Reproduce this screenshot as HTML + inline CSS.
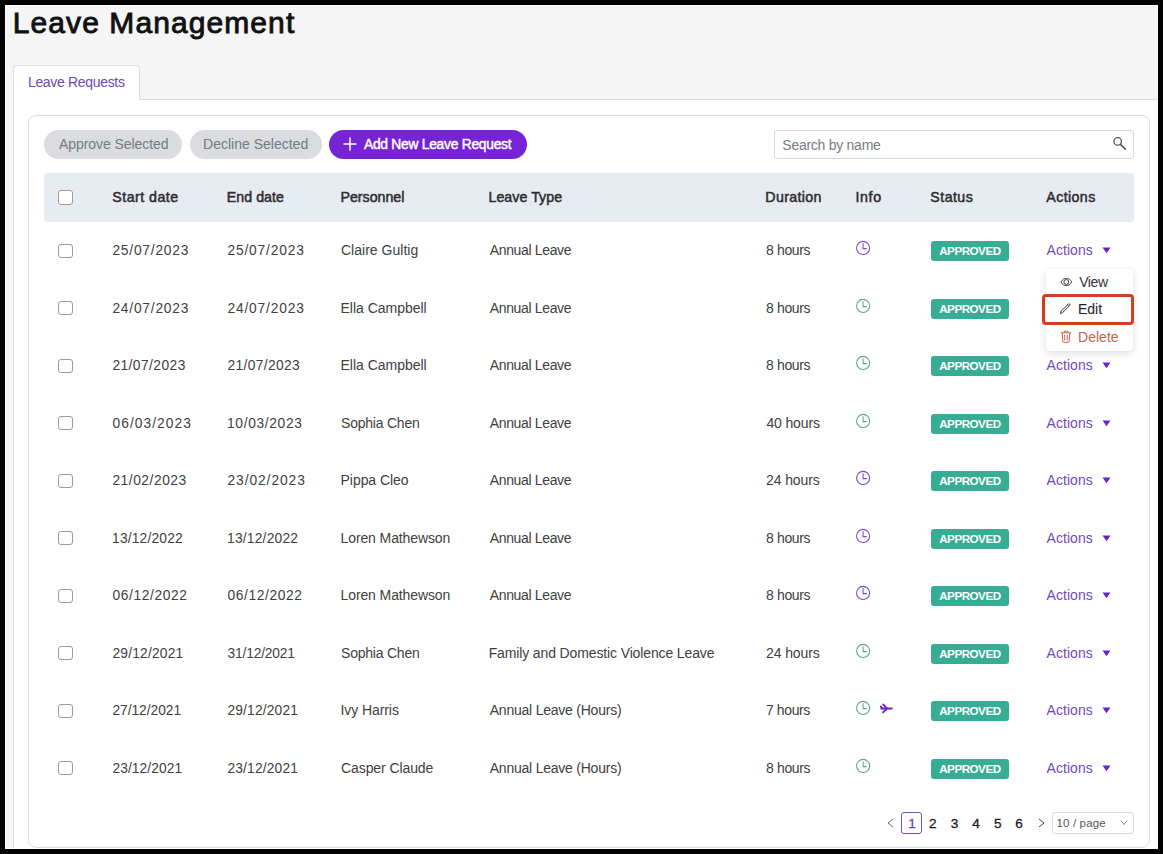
<!DOCTYPE html><html><head><meta charset="utf-8"><style>
*{box-sizing:border-box}
html,body{margin:0;padding:0}
body{width:1163px;height:854px;overflow:hidden;background:#000;position:relative;font-family:"Liberation Sans",sans-serif}
.t{position:absolute;white-space:nowrap}
.a{position:absolute}
</style></head><body><div class="a" style="left:5px;top:5px;width:1153px;height:844px;background:#fff"></div>
<div class="a" style="left:6px;top:6px;width:1151px;height:842px;background:#f5f5f5"></div>
<div class="t" style="left:12.74px;top:8px;font-size:30px;line-height:30px;color:#111;font-weight:400;letter-spacing:1.087px;-webkit-text-stroke:0.9px #111">Leave Management</div>
<div class="a" style="left:13px;top:99px;width:1144px;height:749px;background:#fff;border-top:1px solid #dedede;border-left:1px solid #dedede"></div>
<div class="a" style="left:13px;top:65px;width:127px;height:35px;background:#fff;border:1px solid #dedede;border-bottom:none;border-radius:4px 4px 0 0"></div>
<div class="t" style="left:27.95px;top:75px;font-size:14px;line-height:14px;color:#7048b0;font-weight:400;letter-spacing:-0.326px;">Leave Requests</div>
<div class="a" style="left:28px;top:115px;width:1122px;height:733px;background:#fff;border:1px solid #dddddd;border-radius:8px"></div>
<div class="a" style="left:44px;top:130px;width:138px;height:29px;background:#dbdce0;border-radius:15px"></div>
<div class="t" style="left:59.07px;top:137px;font-size:14px;line-height:14px;color:#767a80;font-weight:400;letter-spacing:-0.073px;">Approve Selected</div>
<div class="a" style="left:190px;top:130px;width:132px;height:29px;background:#dbdce0;border-radius:15px"></div>
<div class="t" style="left:203.05px;top:137px;font-size:14px;line-height:14px;color:#767a80;font-weight:400;letter-spacing:0.006px;">Decline Selected</div>
<div class="a" style="left:329px;top:130px;width:198px;height:29px;background:#7623d5;border-radius:15px"></div>
<svg class="a" style="left:343px;top:137px" width="14" height="14" viewBox="0 0 14 14"><path d="M7 0.5V13.5M0.5 7H13.5" stroke="#fff" stroke-width="1.5" fill="none"/></svg>
<div class="t" style="left:363.97px;top:138px;font-size:13.8px;line-height:13.8px;color:#fff;font-weight:400;letter-spacing:-0.251px;-webkit-text-stroke:0.45px #fff">Add New Leave Request</div>
<div class="a" style="left:774px;top:130px;width:360px;height:29px;background:#fff;border:1px solid #d9d9d9;border-radius:3px"></div>
<div class="t" style="left:782.36px;top:138px;font-size:14px;line-height:14px;color:#777c84;font-weight:400;letter-spacing:-0.268px;">Search by name</div>
<svg class="a" style="left:1112px;top:136px" width="15" height="15" viewBox="0 0 15 15"><circle cx="5.7" cy="5.45" r="3.75" stroke="#555" stroke-width="1.3" fill="none"/><path d="M8.5 8.4L13.3 13.1" stroke="#555" stroke-width="1.6" stroke-linecap="round"/></svg>
<div class="a" style="left:44px;top:173px;width:1090px;height:49px;background:#e7ebf2;border-radius:3px"></div>
<div class="a" style="left:58px;top:190px;width:15px;height:15px;background:#fff;border:1px solid #9c9c9c;border-radius:3px"></div>
<div class="t" style="left:112.25px;top:190px;font-size:14.2px;line-height:14.2px;color:#2e2e2e;font-weight:400;letter-spacing:0.490px;-webkit-text-stroke:0.5px #2e2e2e">Start date</div>
<div class="t" style="left:226.84px;top:190px;font-size:14.2px;line-height:14.2px;color:#2e2e2e;font-weight:400;letter-spacing:0.033px;-webkit-text-stroke:0.5px #2e2e2e">End date</div>
<div class="t" style="left:340.44px;top:190px;font-size:14.2px;line-height:14.2px;color:#2e2e2e;font-weight:400;letter-spacing:0.009px;-webkit-text-stroke:0.5px #2e2e2e">Personnel</div>
<div class="t" style="left:488.44px;top:190px;font-size:14.2px;line-height:14.2px;color:#2e2e2e;font-weight:400;letter-spacing:0.059px;-webkit-text-stroke:0.5px #2e2e2e">Leave Type</div>
<div class="t" style="left:765.34px;top:190px;font-size:14.2px;line-height:14.2px;color:#2e2e2e;font-weight:400;letter-spacing:0.342px;-webkit-text-stroke:0.5px #2e2e2e">Duration</div>
<div class="t" style="left:855.49px;top:190px;font-size:14.2px;line-height:14.2px;color:#2e2e2e;font-weight:400;letter-spacing:0.639px;-webkit-text-stroke:0.5px #2e2e2e">Info</div>
<div class="t" style="left:930.35px;top:190px;font-size:14.2px;line-height:14.2px;color:#2e2e2e;font-weight:400;letter-spacing:0.439px;-webkit-text-stroke:0.5px #2e2e2e">Status</div>
<div class="t" style="left:1046.27px;top:190px;font-size:14.2px;line-height:14.2px;color:#2e2e2e;font-weight:400;letter-spacing:0.411px;-webkit-text-stroke:0.5px #2e2e2e">Actions</div>
<div class="a" style="left:58px;top:244px;width:15px;height:14px;background:#fff;border:1px solid #9c9c9c;border-radius:3px"></div>
<div class="t" style="left:112.41px;top:244px;font-size:13.8px;line-height:13.8px;color:#404040;font-weight:400;letter-spacing:0.771px;">25/07/2023</div>
<div class="t" style="left:227.41px;top:244px;font-size:13.8px;line-height:13.8px;color:#404040;font-weight:400;letter-spacing:0.838px;">25/07/2023</div>
<div class="t" style="left:341.00px;top:243px;font-size:14px;line-height:14px;color:#404040;font-weight:400;letter-spacing:0.014px;">Claire Gultig</div>
<div class="t" style="left:489.77px;top:243px;font-size:14px;line-height:14px;color:#404040;font-weight:400;letter-spacing:-0.353px;">Annual Leave</div>
<div class="t" style="left:766.08px;top:243px;font-size:14px;line-height:14px;color:#404040;font-weight:400;letter-spacing:-0.364px;">8 hours</div>
<svg class="a" style="left:855.1px;top:240px" width="16" height="16" viewBox="0 0 16 16"><circle cx="8.1" cy="7.9" r="6.55" stroke="#7a48c4" stroke-width="1.05" fill="none"/><path d="M8.1 3.3V8.6H11.8" stroke="#7a48c4" stroke-width="1.05" fill="none"/></svg>
<div class="a" style="left:931px;top:241px;width:78px;height:20px;background:#38ad96;border-radius:3px"></div>
<div class="t" style="left:939.20px;top:245px;font-size:11.6px;line-height:11.6px;color:#fff;font-weight:700;letter-spacing:-0.459px;">APPROVED</div>
<div class="t" style="left:1046.57px;top:243px;font-size:14px;line-height:14px;color:#7448bd;font-weight:400;letter-spacing:0.052px;">Actions</div>
<svg class="a" style="left:1102px;top:247px" width="9" height="7" viewBox="0 0 9 7"><path d="M0.5 0.5H8.5L4.5 6.3Z" fill="#6a22d0"/></svg>
<div class="a" style="left:58px;top:301px;width:15px;height:14px;background:#fff;border:1px solid #9c9c9c;border-radius:3px"></div>
<div class="t" style="left:112.41px;top:302px;font-size:13.8px;line-height:13.8px;color:#404040;font-weight:400;letter-spacing:0.771px;">24/07/2023</div>
<div class="t" style="left:227.41px;top:302px;font-size:13.8px;line-height:13.8px;color:#404040;font-weight:400;letter-spacing:0.838px;">24/07/2023</div>
<div class="t" style="left:340.55px;top:301px;font-size:14px;line-height:14px;color:#404040;font-weight:400;letter-spacing:-0.026px;">Ella Campbell</div>
<div class="t" style="left:489.77px;top:301px;font-size:14px;line-height:14px;color:#404040;font-weight:400;letter-spacing:-0.353px;">Annual Leave</div>
<div class="t" style="left:766.08px;top:301px;font-size:14px;line-height:14px;color:#404040;font-weight:400;letter-spacing:-0.364px;">8 hours</div>
<svg class="a" style="left:855.1px;top:298px" width="16" height="16" viewBox="0 0 16 16"><circle cx="8.1" cy="7.9" r="6.55" stroke="#62a393" stroke-width="1.05" fill="none"/><path d="M8.1 3.3V8.6H11.8" stroke="#62a393" stroke-width="1.05" fill="none"/></svg>
<div class="a" style="left:931px;top:299px;width:78px;height:20px;background:#38ad96;border-radius:3px"></div>
<div class="t" style="left:939.20px;top:303px;font-size:11.6px;line-height:11.6px;color:#fff;font-weight:700;letter-spacing:-0.459px;">APPROVED</div>
<div class="t" style="left:1046.57px;top:301px;font-size:14px;line-height:14px;color:#7448bd;font-weight:400;letter-spacing:0.052px;">Actions</div>
<svg class="a" style="left:1102px;top:305px" width="9" height="7" viewBox="0 0 9 7"><path d="M0.5 0.5H8.5L4.5 6.3Z" fill="#6a22d0"/></svg>
<div class="a" style="left:58px;top:359px;width:15px;height:14px;background:#fff;border:1px solid #9c9c9c;border-radius:3px"></div>
<div class="t" style="left:112.41px;top:359px;font-size:13.8px;line-height:13.8px;color:#404040;font-weight:400;letter-spacing:0.427px;">21/07/2023</div>
<div class="t" style="left:227.41px;top:359px;font-size:13.8px;line-height:13.8px;color:#404040;font-weight:400;letter-spacing:0.371px;">21/07/2023</div>
<div class="t" style="left:340.55px;top:358px;font-size:14px;line-height:14px;color:#404040;font-weight:400;letter-spacing:-0.026px;">Ella Campbell</div>
<div class="t" style="left:489.77px;top:358px;font-size:14px;line-height:14px;color:#404040;font-weight:400;letter-spacing:-0.353px;">Annual Leave</div>
<div class="t" style="left:766.08px;top:358px;font-size:14px;line-height:14px;color:#404040;font-weight:400;letter-spacing:-0.364px;">8 hours</div>
<svg class="a" style="left:855.1px;top:355px" width="16" height="16" viewBox="0 0 16 16"><circle cx="8.1" cy="7.9" r="6.55" stroke="#62a393" stroke-width="1.05" fill="none"/><path d="M8.1 3.3V8.6H11.8" stroke="#62a393" stroke-width="1.05" fill="none"/></svg>
<div class="a" style="left:931px;top:356px;width:78px;height:20px;background:#38ad96;border-radius:3px"></div>
<div class="t" style="left:939.20px;top:360px;font-size:11.6px;line-height:11.6px;color:#fff;font-weight:700;letter-spacing:-0.459px;">APPROVED</div>
<div class="t" style="left:1046.57px;top:358px;font-size:14px;line-height:14px;color:#7448bd;font-weight:400;letter-spacing:0.052px;">Actions</div>
<svg class="a" style="left:1102px;top:362px" width="9" height="7" viewBox="0 0 9 7"><path d="M0.5 0.5H8.5L4.5 6.3Z" fill="#6a22d0"/></svg>
<div class="a" style="left:58px;top:416px;width:15px;height:14px;background:#fff;border:1px solid #9c9c9c;border-radius:3px"></div>
<div class="t" style="left:112.55px;top:417px;font-size:13.8px;line-height:13.8px;color:#404040;font-weight:400;letter-spacing:1.023px;">06/03/2023</div>
<div class="t" style="left:227.05px;top:417px;font-size:13.8px;line-height:13.8px;color:#404040;font-weight:400;letter-spacing:0.645px;">10/03/2023</div>
<div class="t" style="left:341.06px;top:416px;font-size:14px;line-height:14px;color:#404040;font-weight:400;letter-spacing:-0.221px;">Sophia Chen</div>
<div class="t" style="left:489.77px;top:416px;font-size:14px;line-height:14px;color:#404040;font-weight:400;letter-spacing:-0.353px;">Annual Leave</div>
<div class="t" style="left:766.39px;top:416px;font-size:14px;line-height:14px;color:#404040;font-weight:400;letter-spacing:-0.125px;">40 hours</div>
<svg class="a" style="left:855.1px;top:413px" width="16" height="16" viewBox="0 0 16 16"><circle cx="8.1" cy="7.9" r="6.55" stroke="#62a393" stroke-width="1.05" fill="none"/><path d="M8.1 3.3V8.6H11.8" stroke="#62a393" stroke-width="1.05" fill="none"/></svg>
<div class="a" style="left:931px;top:414px;width:78px;height:20px;background:#38ad96;border-radius:3px"></div>
<div class="t" style="left:939.20px;top:418px;font-size:11.6px;line-height:11.6px;color:#fff;font-weight:700;letter-spacing:-0.459px;">APPROVED</div>
<div class="t" style="left:1046.57px;top:416px;font-size:14px;line-height:14px;color:#7448bd;font-weight:400;letter-spacing:0.052px;">Actions</div>
<svg class="a" style="left:1102px;top:420px" width="9" height="7" viewBox="0 0 9 7"><path d="M0.5 0.5H8.5L4.5 6.3Z" fill="#6a22d0"/></svg>
<div class="a" style="left:58px;top:474px;width:15px;height:14px;background:#fff;border:1px solid #9c9c9c;border-radius:3px"></div>
<div class="t" style="left:112.41px;top:474px;font-size:13.8px;line-height:13.8px;color:#404040;font-weight:400;letter-spacing:0.527px;">21/02/2023</div>
<div class="t" style="left:227.41px;top:474px;font-size:13.8px;line-height:13.8px;color:#404040;font-weight:400;letter-spacing:0.938px;">23/02/2023</div>
<div class="t" style="left:340.55px;top:473px;font-size:14px;line-height:14px;color:#404040;font-weight:400;letter-spacing:-0.050px;">Pippa Cleo</div>
<div class="t" style="left:489.77px;top:473px;font-size:14px;line-height:14px;color:#404040;font-weight:400;letter-spacing:-0.353px;">Annual Leave</div>
<div class="t" style="left:766.00px;top:473px;font-size:14px;line-height:14px;color:#404040;font-weight:400;letter-spacing:-0.112px;">24 hours</div>
<svg class="a" style="left:855.1px;top:470px" width="16" height="16" viewBox="0 0 16 16"><circle cx="8.1" cy="7.9" r="6.55" stroke="#7a48c4" stroke-width="1.05" fill="none"/><path d="M8.1 3.3V8.6H11.8" stroke="#7a48c4" stroke-width="1.05" fill="none"/></svg>
<div class="a" style="left:931px;top:471px;width:78px;height:20px;background:#38ad96;border-radius:3px"></div>
<div class="t" style="left:939.20px;top:475px;font-size:11.6px;line-height:11.6px;color:#fff;font-weight:700;letter-spacing:-0.459px;">APPROVED</div>
<div class="t" style="left:1046.57px;top:473px;font-size:14px;line-height:14px;color:#7448bd;font-weight:400;letter-spacing:0.052px;">Actions</div>
<svg class="a" style="left:1102px;top:477px" width="9" height="7" viewBox="0 0 9 7"><path d="M0.5 0.5H8.5L4.5 6.3Z" fill="#6a22d0"/></svg>
<div class="a" style="left:58px;top:531px;width:15px;height:14px;background:#fff;border:1px solid #9c9c9c;border-radius:3px"></div>
<div class="t" style="left:112.05px;top:532px;font-size:13.8px;line-height:13.8px;color:#404040;font-weight:400;letter-spacing:0.176px;">13/12/2022</div>
<div class="t" style="left:227.05px;top:532px;font-size:13.8px;line-height:13.8px;color:#404040;font-weight:400;letter-spacing:0.209px;">13/12/2022</div>
<div class="t" style="left:340.55px;top:531px;font-size:14px;line-height:14px;color:#404040;font-weight:400;letter-spacing:-0.111px;">Loren Mathewson</div>
<div class="t" style="left:489.77px;top:531px;font-size:14px;line-height:14px;color:#404040;font-weight:400;letter-spacing:-0.353px;">Annual Leave</div>
<div class="t" style="left:766.08px;top:531px;font-size:14px;line-height:14px;color:#404040;font-weight:400;letter-spacing:-0.364px;">8 hours</div>
<svg class="a" style="left:855.1px;top:528px" width="16" height="16" viewBox="0 0 16 16"><circle cx="8.1" cy="7.9" r="6.55" stroke="#7a48c4" stroke-width="1.05" fill="none"/><path d="M8.1 3.3V8.6H11.8" stroke="#7a48c4" stroke-width="1.05" fill="none"/></svg>
<div class="a" style="left:931px;top:529px;width:78px;height:20px;background:#38ad96;border-radius:3px"></div>
<div class="t" style="left:939.20px;top:533px;font-size:11.6px;line-height:11.6px;color:#fff;font-weight:700;letter-spacing:-0.459px;">APPROVED</div>
<div class="t" style="left:1046.57px;top:531px;font-size:14px;line-height:14px;color:#7448bd;font-weight:400;letter-spacing:0.052px;">Actions</div>
<svg class="a" style="left:1102px;top:535px" width="9" height="7" viewBox="0 0 9 7"><path d="M0.5 0.5H8.5L4.5 6.3Z" fill="#6a22d0"/></svg>
<div class="a" style="left:58px;top:589px;width:15px;height:14px;background:#fff;border:1px solid #9c9c9c;border-radius:3px"></div>
<div class="t" style="left:112.55px;top:589px;font-size:13.8px;line-height:13.8px;color:#404040;font-weight:400;letter-spacing:0.599px;">06/12/2022</div>
<div class="t" style="left:227.55px;top:589px;font-size:13.8px;line-height:13.8px;color:#404040;font-weight:400;letter-spacing:0.599px;">06/12/2022</div>
<div class="t" style="left:340.55px;top:588px;font-size:14px;line-height:14px;color:#404040;font-weight:400;letter-spacing:-0.111px;">Loren Mathewson</div>
<div class="t" style="left:489.77px;top:588px;font-size:14px;line-height:14px;color:#404040;font-weight:400;letter-spacing:-0.353px;">Annual Leave</div>
<div class="t" style="left:766.08px;top:588px;font-size:14px;line-height:14px;color:#404040;font-weight:400;letter-spacing:-0.364px;">8 hours</div>
<svg class="a" style="left:855.1px;top:585px" width="16" height="16" viewBox="0 0 16 16"><circle cx="8.1" cy="7.9" r="6.55" stroke="#7a48c4" stroke-width="1.05" fill="none"/><path d="M8.1 3.3V8.6H11.8" stroke="#7a48c4" stroke-width="1.05" fill="none"/></svg>
<div class="a" style="left:931px;top:586px;width:78px;height:20px;background:#38ad96;border-radius:3px"></div>
<div class="t" style="left:939.20px;top:590px;font-size:11.6px;line-height:11.6px;color:#fff;font-weight:700;letter-spacing:-0.459px;">APPROVED</div>
<div class="t" style="left:1046.57px;top:588px;font-size:14px;line-height:14px;color:#7448bd;font-weight:400;letter-spacing:0.052px;">Actions</div>
<svg class="a" style="left:1102px;top:592px" width="9" height="7" viewBox="0 0 9 7"><path d="M0.5 0.5H8.5L4.5 6.3Z" fill="#6a22d0"/></svg>
<div class="a" style="left:58px;top:646px;width:15px;height:14px;background:#fff;border:1px solid #9c9c9c;border-radius:3px"></div>
<div class="t" style="left:112.41px;top:647px;font-size:13.8px;line-height:13.8px;color:#404040;font-weight:400;letter-spacing:0.200px;">29/12/2021</div>
<div class="t" style="left:227.58px;top:647px;font-size:13.8px;line-height:13.8px;color:#404040;font-weight:400;letter-spacing:-0.185px;">31/12/2021</div>
<div class="t" style="left:341.06px;top:646px;font-size:14px;line-height:14px;color:#404040;font-weight:400;letter-spacing:-0.221px;">Sophia Chen</div>
<div class="t" style="left:488.65px;top:646px;font-size:14px;line-height:14px;color:#404040;font-weight:400;letter-spacing:-0.128px;">Family and Domestic Violence Leave</div>
<div class="t" style="left:766.00px;top:646px;font-size:14px;line-height:14px;color:#404040;font-weight:400;letter-spacing:-0.112px;">24 hours</div>
<svg class="a" style="left:855.1px;top:643px" width="16" height="16" viewBox="0 0 16 16"><circle cx="8.1" cy="7.9" r="6.55" stroke="#62a393" stroke-width="1.05" fill="none"/><path d="M8.1 3.3V8.6H11.8" stroke="#62a393" stroke-width="1.05" fill="none"/></svg>
<div class="a" style="left:931px;top:644px;width:78px;height:20px;background:#38ad96;border-radius:3px"></div>
<div class="t" style="left:939.20px;top:648px;font-size:11.6px;line-height:11.6px;color:#fff;font-weight:700;letter-spacing:-0.459px;">APPROVED</div>
<div class="t" style="left:1046.57px;top:646px;font-size:14px;line-height:14px;color:#7448bd;font-weight:400;letter-spacing:0.052px;">Actions</div>
<svg class="a" style="left:1102px;top:650px" width="9" height="7" viewBox="0 0 9 7"><path d="M0.5 0.5H8.5L4.5 6.3Z" fill="#6a22d0"/></svg>
<div class="a" style="left:58px;top:704px;width:15px;height:14px;background:#fff;border:1px solid #9c9c9c;border-radius:3px"></div>
<div class="t" style="left:112.41px;top:704px;font-size:13.8px;line-height:13.8px;color:#404040;font-weight:400;letter-spacing:-0.034px;">27/12/2021</div>
<div class="t" style="left:227.41px;top:704px;font-size:13.8px;line-height:13.8px;color:#404040;font-weight:400;letter-spacing:0.166px;">29/12/2021</div>
<div class="t" style="left:340.41px;top:703px;font-size:14px;line-height:14px;color:#404040;font-weight:400;letter-spacing:-0.068px;">Ivy Harris</div>
<div class="t" style="left:489.77px;top:703px;font-size:14px;line-height:14px;color:#404040;font-weight:400;letter-spacing:-0.230px;">Annual Leave (Hours)</div>
<div class="t" style="left:765.97px;top:703px;font-size:14px;line-height:14px;color:#404040;font-weight:400;letter-spacing:-0.395px;">7 hours</div>
<svg class="a" style="left:855.1px;top:700px" width="16" height="16" viewBox="0 0 16 16"><circle cx="8.1" cy="7.9" r="6.55" stroke="#62a393" stroke-width="1.05" fill="none"/><path d="M8.1 3.3V8.6H11.8" stroke="#62a393" stroke-width="1.05" fill="none"/></svg>
<svg class="a" style="left:874px;top:698px" width="24" height="20" viewBox="0 0 24 20"><g stroke="#6e20d0" stroke-linecap="round" fill="none"><path d="M7.3 10.5H17.7" stroke-width="2.1"/><path d="M6.9 8.4L8.2 10.5M9.1 6.4L12.6 10M12.6 11L9.1 14.4" stroke-width="1.85"/></g></svg>
<div class="a" style="left:931px;top:701px;width:78px;height:20px;background:#38ad96;border-radius:3px"></div>
<div class="t" style="left:939.20px;top:705px;font-size:11.6px;line-height:11.6px;color:#fff;font-weight:700;letter-spacing:-0.459px;">APPROVED</div>
<div class="t" style="left:1046.57px;top:703px;font-size:14px;line-height:14px;color:#7448bd;font-weight:400;letter-spacing:0.052px;">Actions</div>
<svg class="a" style="left:1102px;top:707px" width="9" height="7" viewBox="0 0 9 7"><path d="M0.5 0.5H8.5L4.5 6.3Z" fill="#6a22d0"/></svg>
<div class="a" style="left:58px;top:761px;width:15px;height:14px;background:#fff;border:1px solid #9c9c9c;border-radius:3px"></div>
<div class="t" style="left:112.41px;top:762px;font-size:13.8px;line-height:13.8px;color:#404040;font-weight:400;letter-spacing:0.077px;">23/12/2021</div>
<div class="t" style="left:227.41px;top:762px;font-size:13.8px;line-height:13.8px;color:#404040;font-weight:400;letter-spacing:0.166px;">23/12/2021</div>
<div class="t" style="left:341.00px;top:761px;font-size:14px;line-height:14px;color:#404040;font-weight:400;letter-spacing:-0.089px;">Casper Claude</div>
<div class="t" style="left:489.77px;top:761px;font-size:14px;line-height:14px;color:#404040;font-weight:400;letter-spacing:-0.230px;">Annual Leave (Hours)</div>
<div class="t" style="left:766.08px;top:761px;font-size:14px;line-height:14px;color:#404040;font-weight:400;letter-spacing:-0.364px;">8 hours</div>
<svg class="a" style="left:855.1px;top:758px" width="16" height="16" viewBox="0 0 16 16"><circle cx="8.1" cy="7.9" r="6.55" stroke="#62a393" stroke-width="1.05" fill="none"/><path d="M8.1 3.3V8.6H11.8" stroke="#62a393" stroke-width="1.05" fill="none"/></svg>
<div class="a" style="left:931px;top:759px;width:78px;height:20px;background:#38ad96;border-radius:3px"></div>
<div class="t" style="left:939.20px;top:763px;font-size:11.6px;line-height:11.6px;color:#fff;font-weight:700;letter-spacing:-0.459px;">APPROVED</div>
<div class="t" style="left:1046.57px;top:761px;font-size:14px;line-height:14px;color:#7448bd;font-weight:400;letter-spacing:0.052px;">Actions</div>
<svg class="a" style="left:1102px;top:765px" width="9" height="7" viewBox="0 0 9 7"><path d="M0.5 0.5H8.5L4.5 6.3Z" fill="#6a22d0"/></svg>
<div class="a" style="left:1046px;top:269px;width:87px;height:82px;background:#fff;border-radius:4px;box-shadow:0 3px 8px rgba(0,0,0,0.12),0 0 2px rgba(0,0,0,0.06)"></div>
<svg class="a" style="left:1060px;top:277px" width="13" height="10" viewBox="0 0 13 10"><path d="M0.9 5C2.6 2.2 4.4 1.4 6.3 1.4S10.1 2.2 11.7 5C10.1 7.8 8.3 8.6 6.3 8.6S2.6 7.8 0.9 5Z" stroke="#444" stroke-width="1" fill="none"/><circle cx="6.3" cy="5" r="2.45" stroke="#444" stroke-width="1" fill="none"/></svg>
<div class="t" style="left:1079.14px;top:275px;font-size:14px;line-height:14px;color:#333;font-weight:400;letter-spacing:-0.391px;">View</div>
<div class="a" style="left:1042px;top:294px;width:92px;height:31px;border:3px solid #d0401c;border-radius:4px"></div>
<svg class="a" style="left:1059px;top:303px" width="13" height="12" viewBox="0 0 13 12"><path d="M1.5 10.6L2 8.3L9.3 1.1C9.7 0.7 10.3 0.7 10.7 1.1C11.1 1.5 11.1 2.1 10.7 2.5L3.5 9.7ZM8.4 2L9.8 3.4" stroke="#333" stroke-width="0.95" fill="none"/></svg>
<div class="t" style="left:1078.05px;top:302px;font-size:14px;line-height:14px;color:#222;font-weight:400;letter-spacing:-0.025px;">Edit</div>
<svg class="a" style="left:1060px;top:330px" width="12" height="13" viewBox="0 0 12 13"><path d="M0.8 2.8H11.2M4.2 2.8V1.2H7.8V2.8M2.2 2.8L2.8 11.6Q2.9 12.3 3.5 12.3H8.5Q9.1 12.3 9.2 11.6L9.8 2.8M4.7 4.8V10.3M7.3 4.8V10.3" stroke="#c9604e" stroke-width="1" fill="none"/></svg>
<div class="t" style="left:1078.05px;top:330px;font-size:14px;line-height:14px;color:#c9604e;font-weight:400;letter-spacing:0.021px;">Delete</div>
<svg class="a" style="left:886px;top:818px" width="9" height="10" viewBox="0 0 9 10"><path d="M7 1L2 5L7 9" stroke="#666" stroke-width="1" fill="none"/></svg>
<div class="a" style="left:901px;top:812px;width:21px;height:22px;border:1px solid #7a4cc0;border-radius:3px"></div>
<div class="t" style="left:908.17px;top:817px;font-size:13.6px;line-height:13.6px;color:#6c40b8;font-weight:400;letter-spacing:-1.175px;-webkit-text-stroke:0.3px #6c40b8">1</div>
<div class="t" style="left:929.02px;top:817px;font-size:13.6px;line-height:13.6px;color:#1a1a1a;font-weight:400;letter-spacing:1.098px;-webkit-text-stroke:0.3px #1a1a1a">2</div>
<div class="t" style="left:950.68px;top:817px;font-size:13.6px;line-height:13.6px;color:#1a1a1a;font-weight:400;letter-spacing:0.854px;-webkit-text-stroke:0.3px #1a1a1a">3</div>
<div class="t" style="left:972.20px;top:817px;font-size:13.6px;line-height:13.6px;color:#1a1a1a;font-weight:400;letter-spacing:1.546px;-webkit-text-stroke:0.3px #1a1a1a">4</div>
<div class="t" style="left:993.96px;top:817px;font-size:13.6px;line-height:13.6px;color:#1a1a1a;font-weight:400;letter-spacing:0.854px;-webkit-text-stroke:0.3px #1a1a1a">5</div>
<div class="t" style="left:1015.32px;top:817px;font-size:13.6px;line-height:13.6px;color:#1a1a1a;font-weight:400;letter-spacing:1.417px;-webkit-text-stroke:0.3px #1a1a1a">6</div>
<svg class="a" style="left:1037px;top:818px" width="9" height="10" viewBox="0 0 9 10"><path d="M2 1L7 5L2 9" stroke="#444" stroke-width="1" fill="none"/></svg>
<div class="a" style="left:1052px;top:812px;width:82px;height:22px;border:1px solid #d9d9d9;border-radius:3px"></div>
<div class="t" style="left:1056.53px;top:818px;font-size:11.5px;line-height:11.5px;color:#555;font-weight:400;letter-spacing:0.141px;">10 / page</div>
<svg class="a" style="left:1120px;top:819px" width="8" height="7" viewBox="0 0 8 7"><path d="M1 1.5L4 5.5L7 1.5" stroke="#888" stroke-width="1" fill="none"/></svg></body></html>
